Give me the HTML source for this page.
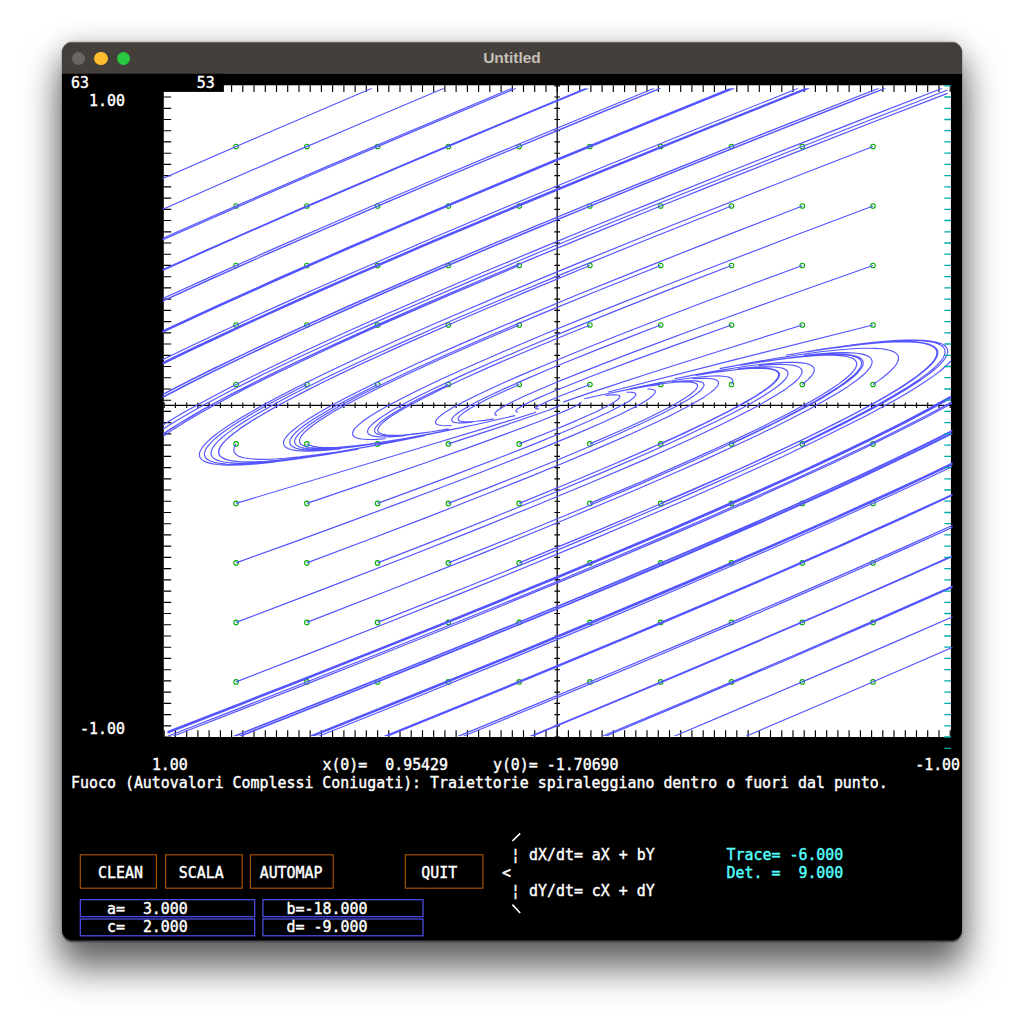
<!DOCTYPE html>
<html><head><meta charset="utf-8"><title>Untitled</title>
<style>
html,body{margin:0;padding:0}
body{width:1024px;height:1025px;position:relative;overflow:hidden;background:#fff}
#sh{position:absolute;left:62.2px;top:42.1px;width:899.5px;height:900.4px;border-radius:11px;box-shadow:0 24px 36px 3px rgba(0,0,0,.58),0 2px 26px rgba(0,0,0,.17),0 0 1.5px rgba(0,0,0,.6)}
#win{position:absolute;left:62.2px;top:42.1px;width:899.5px;height:900.4px;border-radius:11px;overflow:hidden;background:#000;box-shadow:inset 0 -1.6px 0 #4a4a4a}
#win>.in{position:absolute;left:-62.2px;top:-42.1px;width:1024px;height:1025px}
#tb{position:absolute;left:62px;top:42px;width:900px;height:32px;background:#453f3b;box-shadow:inset 0 1px 0 rgba(255,255,255,.22)}
#tb .l{position:absolute;top:9.7px;width:13.6px;height:13.6px;border-radius:50%}
#ttl{position:absolute;left:62px;top:42px;width:900px;height:32px;line-height:32px;text-align:center;color:#c4bfba;font:bold 15.5px/32px "Liberation Sans",sans-serif}
.t{position:absolute;white-space:pre;font-family:"DejaVu Sans Mono","Liberation Mono",monospace;font-weight:normal;font-size:14.92px;line-height:17.96px;height:17.96px;-webkit-text-stroke:0.4px currentColor;margin-top:1px;transform:scaleY(1.06);transform-origin:0 14.2px}
</style></head><body>
<div id="sh"></div>
<div id="win"><div class="in">
<div id="tb"><div class="l" style="left:9.9px;background:#6a6763"></div><div class="l" style="left:32.2px;background:#febc2e"></div><div class="l" style="left:54.6px;background:#28c840"></div></div>
<div id="ttl">Untitled</div>
<svg width="1024" height="1025" viewBox="0 0 1024 1025" style="position:absolute;left:0;top:0"><defs><clipPath id="cp"><rect x="162.6" y="88.3" width="789.9" height="647.9"/></clipPath></defs><rect x="163.8" y="85.3" width="787.1" height="651.7" fill="#fff"/><path d="M164.2 85.3V92M164.2 730.2V737M164.2 402.5V408.1M175.4 85.3V92M175.4 730.2V737M175.4 402.5V408.1M186.7 85.3V92M186.7 730.2V737M186.7 402.5V408.1M197.9 85.3V92M197.9 730.2V737M197.9 402.5V408.1M209.1 85.3V92M209.1 730.2V737M209.1 402.5V408.1M220.4 85.3V92M220.4 730.2V737M220.4 402.5V408.1M231.6 85.3V92M231.6 730.2V737M231.6 402.5V408.1M242.8 85.3V92M242.8 730.2V737M242.8 402.5V408.1M254.0 85.3V92M254.0 730.2V737M254.0 402.5V408.1M265.3 85.3V92M265.3 730.2V737M265.3 402.5V408.1M276.5 85.3V92M276.5 730.2V737M276.5 402.5V408.1M287.7 85.3V92M287.7 730.2V737M287.7 402.5V408.1M299.0 85.3V92M299.0 730.2V737M299.0 402.5V408.1M310.2 85.3V92M310.2 730.2V737M310.2 402.5V408.1M321.4 85.3V92M321.4 730.2V737M321.4 402.5V408.1M332.6 85.3V92M332.6 730.2V737M332.6 402.5V408.1M343.9 85.3V92M343.9 730.2V737M343.9 402.5V408.1M355.1 85.3V92M355.1 730.2V737M355.1 402.5V408.1M366.3 85.3V92M366.3 730.2V737M366.3 402.5V408.1M377.6 85.3V92M377.6 730.2V737M377.6 402.5V408.1M388.8 85.3V92M388.8 730.2V737M388.8 402.5V408.1M400.0 85.3V92M400.0 730.2V737M400.0 402.5V408.1M411.2 85.3V92M411.2 730.2V737M411.2 402.5V408.1M422.5 85.3V92M422.5 730.2V737M422.5 402.5V408.1M433.7 85.3V92M433.7 730.2V737M433.7 402.5V408.1M444.9 85.3V92M444.9 730.2V737M444.9 402.5V408.1M456.1 85.3V92M456.1 730.2V737M456.1 402.5V408.1M467.4 85.3V92M467.4 730.2V737M467.4 402.5V408.1M478.6 85.3V92M478.6 730.2V737M478.6 402.5V408.1M489.8 85.3V92M489.8 730.2V737M489.8 402.5V408.1M501.1 85.3V92M501.1 730.2V737M501.1 402.5V408.1M512.3 85.3V92M512.3 730.2V737M512.3 402.5V408.1M523.5 85.3V92M523.5 730.2V737M523.5 402.5V408.1M534.7 85.3V92M534.7 730.2V737M534.7 402.5V408.1M546.0 85.3V92M546.0 730.2V737M546.0 402.5V408.1M557.2 85.3V92M557.2 730.2V737M557.2 402.5V408.1M568.4 85.3V92M568.4 730.2V737M568.4 402.5V408.1M579.7 85.3V92M579.7 730.2V737M579.7 402.5V408.1M590.9 85.3V92M590.9 730.2V737M590.9 402.5V408.1M602.1 85.3V92M602.1 730.2V737M602.1 402.5V408.1M613.3 85.3V92M613.3 730.2V737M613.3 402.5V408.1M624.6 85.3V92M624.6 730.2V737M624.6 402.5V408.1M635.8 85.3V92M635.8 730.2V737M635.8 402.5V408.1M647.0 85.3V92M647.0 730.2V737M647.0 402.5V408.1M658.3 85.3V92M658.3 730.2V737M658.3 402.5V408.1M669.5 85.3V92M669.5 730.2V737M669.5 402.5V408.1M680.7 85.3V92M680.7 730.2V737M680.7 402.5V408.1M691.9 85.3V92M691.9 730.2V737M691.9 402.5V408.1M703.2 85.3V92M703.2 730.2V737M703.2 402.5V408.1M714.4 85.3V92M714.4 730.2V737M714.4 402.5V408.1M725.6 85.3V92M725.6 730.2V737M725.6 402.5V408.1M736.8 85.3V92M736.8 730.2V737M736.8 402.5V408.1M748.1 85.3V92M748.1 730.2V737M748.1 402.5V408.1M759.3 85.3V92M759.3 730.2V737M759.3 402.5V408.1M770.5 85.3V92M770.5 730.2V737M770.5 402.5V408.1M781.8 85.3V92M781.8 730.2V737M781.8 402.5V408.1M793.0 85.3V92M793.0 730.2V737M793.0 402.5V408.1M804.2 85.3V92M804.2 730.2V737M804.2 402.5V408.1M815.4 85.3V92M815.4 730.2V737M815.4 402.5V408.1M826.7 85.3V92M826.7 730.2V737M826.7 402.5V408.1M837.9 85.3V92M837.9 730.2V737M837.9 402.5V408.1M849.1 85.3V92M849.1 730.2V737M849.1 402.5V408.1M860.4 85.3V92M860.4 730.2V737M860.4 402.5V408.1M871.6 85.3V92M871.6 730.2V737M871.6 402.5V408.1M882.8 85.3V92M882.8 730.2V737M882.8 402.5V408.1M894.0 85.3V92M894.0 730.2V737M894.0 402.5V408.1M905.3 85.3V92M905.3 730.2V737M905.3 402.5V408.1M916.5 85.3V92M916.5 730.2V737M916.5 402.5V408.1M927.7 85.3V92M927.7 730.2V737M927.7 402.5V408.1M939.0 85.3V92M939.0 730.2V737M939.0 402.5V408.1M950.2 85.3V92M950.2 730.2V737M950.2 402.5V408.1M163.8 85.8H171.2M554.4 85.8H560.0M163.8 97.0H171.2M554.4 97.0H560.0M163.8 108.3H171.2M554.4 108.3H560.0M163.8 119.5H171.2M554.4 119.5H560.0M163.8 130.7H171.2M554.4 130.7H560.0M163.8 141.9H171.2M554.4 141.9H560.0M163.8 153.2H171.2M554.4 153.2H560.0M163.8 164.4H171.2M554.4 164.4H560.0M163.8 175.6H171.2M554.4 175.6H560.0M163.8 186.9H171.2M554.4 186.9H560.0M163.8 198.1H171.2M554.4 198.1H560.0M163.8 209.3H171.2M554.4 209.3H560.0M163.8 220.5H171.2M554.4 220.5H560.0M163.8 231.8H171.2M554.4 231.8H560.0M163.8 243.0H171.2M554.4 243.0H560.0M163.8 254.2H171.2M554.4 254.2H560.0M163.8 265.4H171.2M554.4 265.4H560.0M163.8 276.7H171.2M554.4 276.7H560.0M163.8 287.9H171.2M554.4 287.9H560.0M163.8 299.1H171.2M554.4 299.1H560.0M163.8 310.4H171.2M554.4 310.4H560.0M163.8 321.6H171.2M554.4 321.6H560.0M163.8 332.8H171.2M554.4 332.8H560.0M163.8 344.0H171.2M554.4 344.0H560.0M163.8 355.3H171.2M554.4 355.3H560.0M163.8 366.5H171.2M554.4 366.5H560.0M163.8 377.7H171.2M554.4 377.7H560.0M163.8 389.0H171.2M554.4 389.0H560.0M163.8 400.2H171.2M554.4 400.2H560.0M163.8 411.4H171.2M554.4 411.4H560.0M163.8 422.6H171.2M554.4 422.6H560.0M163.8 433.9H171.2M554.4 433.9H560.0M163.8 445.1H171.2M554.4 445.1H560.0M163.8 456.3H171.2M554.4 456.3H560.0M163.8 467.6H171.2M554.4 467.6H560.0M163.8 478.8H171.2M554.4 478.8H560.0M163.8 490.0H171.2M554.4 490.0H560.0M163.8 501.2H171.2M554.4 501.2H560.0M163.8 512.5H171.2M554.4 512.5H560.0M163.8 523.7H171.2M554.4 523.7H560.0M163.8 534.9H171.2M554.4 534.9H560.0M163.8 546.1H171.2M554.4 546.1H560.0M163.8 557.4H171.2M554.4 557.4H560.0M163.8 568.6H171.2M554.4 568.6H560.0M163.8 579.8H171.2M554.4 579.8H560.0M163.8 591.1H171.2M554.4 591.1H560.0M163.8 602.3H171.2M554.4 602.3H560.0M163.8 613.5H171.2M554.4 613.5H560.0M163.8 624.7H171.2M554.4 624.7H560.0M163.8 636.0H171.2M554.4 636.0H560.0M163.8 647.2H171.2M554.4 647.2H560.0M163.8 658.4H171.2M554.4 658.4H560.0M163.8 669.7H171.2M554.4 669.7H560.0M163.8 680.9H171.2M554.4 680.9H560.0M163.8 692.1H171.2M554.4 692.1H560.0M163.8 703.3H171.2M554.4 703.3H560.0M163.8 714.6H171.2M554.4 714.6H560.0M163.8 725.8H171.2M554.4 725.8H560.0M163.8 737.0H171.2M554.4 737.0H560.0" stroke="#000" stroke-width="1.15" fill="none"/><path d="M557.2 85.3V737M163.8 405.3H950.9" stroke="#000" stroke-width="1.3" fill="none"/><g fill="none" stroke="#00aa00" stroke-width="1.05"><circle cx="236.1" cy="146.5" r="2.3"/><circle cx="306.9" cy="146.5" r="2.3"/><circle cx="377.6" cy="146.5" r="2.3"/><circle cx="448.4" cy="146.5" r="2.3"/><circle cx="519.2" cy="146.5" r="2.3"/><circle cx="589.9" cy="146.5" r="2.3"/><circle cx="660.7" cy="146.5" r="2.3"/><circle cx="731.5" cy="146.5" r="2.3"/><circle cx="802.3" cy="146.5" r="2.3"/><circle cx="873.0" cy="146.5" r="2.3"/><circle cx="236.1" cy="206.0" r="2.3"/><circle cx="306.9" cy="206.0" r="2.3"/><circle cx="377.6" cy="206.0" r="2.3"/><circle cx="448.4" cy="206.0" r="2.3"/><circle cx="519.2" cy="206.0" r="2.3"/><circle cx="589.9" cy="206.0" r="2.3"/><circle cx="660.7" cy="206.0" r="2.3"/><circle cx="731.5" cy="206.0" r="2.3"/><circle cx="802.3" cy="206.0" r="2.3"/><circle cx="873.0" cy="206.0" r="2.3"/><circle cx="236.1" cy="265.5" r="2.3"/><circle cx="306.9" cy="265.5" r="2.3"/><circle cx="377.6" cy="265.5" r="2.3"/><circle cx="448.4" cy="265.5" r="2.3"/><circle cx="519.2" cy="265.5" r="2.3"/><circle cx="589.9" cy="265.5" r="2.3"/><circle cx="660.7" cy="265.5" r="2.3"/><circle cx="731.5" cy="265.5" r="2.3"/><circle cx="802.3" cy="265.5" r="2.3"/><circle cx="873.0" cy="265.5" r="2.3"/><circle cx="236.1" cy="325.0" r="2.3"/><circle cx="306.9" cy="325.0" r="2.3"/><circle cx="377.6" cy="325.0" r="2.3"/><circle cx="448.4" cy="325.0" r="2.3"/><circle cx="519.2" cy="325.0" r="2.3"/><circle cx="589.9" cy="325.0" r="2.3"/><circle cx="660.7" cy="325.0" r="2.3"/><circle cx="731.5" cy="325.0" r="2.3"/><circle cx="802.3" cy="325.0" r="2.3"/><circle cx="873.0" cy="325.0" r="2.3"/><circle cx="236.1" cy="384.5" r="2.3"/><circle cx="306.9" cy="384.5" r="2.3"/><circle cx="377.6" cy="384.5" r="2.3"/><circle cx="448.4" cy="384.5" r="2.3"/><circle cx="519.2" cy="384.5" r="2.3"/><circle cx="589.9" cy="384.5" r="2.3"/><circle cx="660.7" cy="384.5" r="2.3"/><circle cx="731.5" cy="384.5" r="2.3"/><circle cx="802.3" cy="384.5" r="2.3"/><circle cx="873.0" cy="384.5" r="2.3"/><circle cx="236.1" cy="443.9" r="2.3"/><circle cx="306.9" cy="443.9" r="2.3"/><circle cx="377.6" cy="443.9" r="2.3"/><circle cx="448.4" cy="443.9" r="2.3"/><circle cx="519.2" cy="443.9" r="2.3"/><circle cx="589.9" cy="443.9" r="2.3"/><circle cx="660.7" cy="443.9" r="2.3"/><circle cx="731.5" cy="443.9" r="2.3"/><circle cx="802.3" cy="443.9" r="2.3"/><circle cx="873.0" cy="443.9" r="2.3"/><circle cx="236.1" cy="503.4" r="2.3"/><circle cx="306.9" cy="503.4" r="2.3"/><circle cx="377.6" cy="503.4" r="2.3"/><circle cx="448.4" cy="503.4" r="2.3"/><circle cx="519.2" cy="503.4" r="2.3"/><circle cx="589.9" cy="503.4" r="2.3"/><circle cx="660.7" cy="503.4" r="2.3"/><circle cx="731.5" cy="503.4" r="2.3"/><circle cx="802.3" cy="503.4" r="2.3"/><circle cx="873.0" cy="503.4" r="2.3"/><circle cx="236.1" cy="562.9" r="2.3"/><circle cx="306.9" cy="562.9" r="2.3"/><circle cx="377.6" cy="562.9" r="2.3"/><circle cx="448.4" cy="562.9" r="2.3"/><circle cx="519.2" cy="562.9" r="2.3"/><circle cx="589.9" cy="562.9" r="2.3"/><circle cx="660.7" cy="562.9" r="2.3"/><circle cx="731.5" cy="562.9" r="2.3"/><circle cx="802.3" cy="562.9" r="2.3"/><circle cx="873.0" cy="562.9" r="2.3"/><circle cx="236.1" cy="622.4" r="2.3"/><circle cx="306.9" cy="622.4" r="2.3"/><circle cx="377.6" cy="622.4" r="2.3"/><circle cx="448.4" cy="622.4" r="2.3"/><circle cx="519.2" cy="622.4" r="2.3"/><circle cx="589.9" cy="622.4" r="2.3"/><circle cx="660.7" cy="622.4" r="2.3"/><circle cx="731.5" cy="622.4" r="2.3"/><circle cx="802.3" cy="622.4" r="2.3"/><circle cx="873.0" cy="622.4" r="2.3"/><circle cx="236.1" cy="681.9" r="2.3"/><circle cx="306.9" cy="681.9" r="2.3"/><circle cx="377.6" cy="681.9" r="2.3"/><circle cx="448.4" cy="681.9" r="2.3"/><circle cx="519.2" cy="681.9" r="2.3"/><circle cx="589.9" cy="681.9" r="2.3"/><circle cx="660.7" cy="681.9" r="2.3"/><circle cx="731.5" cy="681.9" r="2.3"/><circle cx="802.3" cy="681.9" r="2.3"/><circle cx="873.0" cy="681.9" r="2.3"/></g><g clip-path="url(#cp)"><path d="M371.9 88.3L262.7 135.0L159.4 179.9M443.9 88.3L359.0 124.2L281.5 157.4L220.8 183.7L153.0 213.5M516.0 88.3L415.2 130.6L317.4 172.2L239.3 206.1L158.4 241.8M588.3 88.3L535.1 110.3L472.4 136.4L401.6 166.3L346.2 189.9L294.3 212.3L245.6 233.5L200.1 253.7L157.5 272.8M660.7 88.3L578.1 122.1L507.7 151.3L441.5 179.0L380.1 205.1L323.2 229.6L262.2 256.3L214.3 277.6L163.1 300.9M733.2 88.3L646.7 123.3L557.1 160.0L475.1 194.1L400.8 225.6L333.7 254.5L273.3 281.1L212.6 308.5L159.1 333.4M805.9 88.3L704.1 129.0L598.6 171.8L513.4 206.9L429.1 242.4L354.8 274.5L321.1 289.3L283.6 306.0L249.0 321.8L217.2 336.5L188.0 350.3L161.4 363.2M878.8 88.3L816.7 112.7L752.1 138.3L691.3 162.6L634.3 185.6L581.2 207.2L531.8 227.6L485.8 246.8L436.4 267.8L391.1 287.3L349.8 305.4L312.2 322.3L278.0 337.9L247.1 352.4L215.4 367.6L187.4 381.5L162.8 394.2M947.5 90.0L873.2 118.8L792.5 150.3L726.8 176.3L657.9 203.8L595.1 229.3L538.0 252.8L480.0 277.1L428.2 299.2L382.1 319.4L336.9 339.7L297.7 357.8L263.7 374.1L232.0 390.1L205.5 404.1L193.1 411.0L182.0 417.4L172.2 423.3L163.5 428.8M873.0 146.5L766.9 187.7L666.9 227.3L580.7 262.1L539.5 279.1L501.7 294.9L467.0 309.7L431.0 325.2L402.4 337.8L372.9 351.1L346.5 363.3L320.3 375.8L297.4 387.1L277.5 397.3L258.8 407.5L243.2 416.4L230.4 424.3L219.3 431.9L215.2 435.0L211.0 438.5L207.5 441.7L204.7 444.6L202.5 447.2L200.8 450.0L199.8 452.1L199.4 454.4L199.6 456.4L200.4 458.1L201.8 459.6L203.9 461.1L206.3 462.1L209.5 463.1L213.1 463.9L217.8 464.5L222.9 464.9L228.4 465.1L241.1 464.9L256.3 464.0L274.0 462.2M512.2 88.3L410.5 131.0L325.0 167.4L246.7 201.3L194.5 224.3L155.0 241.8M585.9 88.3L474.0 134.8L414.8 159.7L359.1 183.5L296.7 210.4L247.7 231.8L201.8 252.1L159.0 271.3M660.0 88.3L585.4 118.8L514.5 148.2L448.6 175.8L387.4 201.8L330.1 226.5L268.4 253.4L212.2 278.4L161.2 301.6M734.5 88.3L646.7 123.8L557.7 160.3L476.8 194.0L402.9 225.3L335.8 254.3L275.3 280.9L214.7 308.2L161.2 333.0M809.3 88.3L708.0 128.7L603.4 171.2L510.3 209.7L426.9 244.8L353.5 276.5L320.2 291.2L283.1 307.7L248.9 323.3L217.5 337.9L188.7 351.5L162.4 364.3M884.7 88.3L823.4 112.3L758.9 137.8L698.7 161.9L642.4 184.6L581.5 209.5L532.6 229.6L487.2 248.6L438.3 269.3L393.6 288.6L352.7 306.5L315.5 323.2L277.2 340.7L247.1 354.9L216.2 369.7L189.0 383.3L162.3 397.2M947.5 93.4L871.3 122.8L791.8 153.8L719.2 182.6L652.7 209.2L591.4 234.1L529.1 259.8L473.3 283.2L423.5 304.6L374.5 326.1L331.7 345.4L294.6 362.8L259.6 379.8L230.1 394.8L216.2 402.2L203.7 409.1L192.5 415.5L181.0 422.4L172.4 427.8L163.7 433.6M731.5 206.0L645.3 240.3L564.5 273.1L495.3 302.0L462.4 316.0L432.4 329.0L405.0 341.1L376.7 353.9L354.4 364.2L331.5 375.1L311.3 385.0L291.3 395.1L274.2 404.2L259.6 412.4L246.1 420.5L235.1 427.6L226.6 433.9L223.1 436.7L219.5 439.8L217.1 442.2L214.8 444.9L213.0 447.3L211.9 449.5L211.2 451.5L211.0 453.6L211.3 455.1L212.3 456.8L213.7 458.2L215.6 459.4L217.9 460.4L221.0 461.3L224.1 462.0L228.1 462.5L232.4 462.9L237.6 463.2L249.0 463.1L262.2 462.4L277.7 461.0L295.1 458.9M802.3 206.0L720.7 237.6L643.7 268.1L577.4 294.8L516.6 320.1L462.2 343.4L417.5 363.3L397.2 372.7L376.9 382.3L359.3 391.0L344.0 398.8L329.5 406.6L317.5 413.5L307.6 419.6L299.1 425.4L292.6 430.5L289.9 432.9L287.7 435.2L286.0 437.2L284.6 439.3L283.9 441.0L283.5 442.7L283.6 444.3L284.2 445.6L285.2 446.8L286.8 447.9L288.6 448.7L291.0 449.5L293.8 450.1L297.3 450.6L305.4 451.1L315.1 450.9L326.8 450.2L340.3 448.9M873.0 206.0L796.0 235.0L723.0 263.0L659.6 287.7L600.9 311.1L547.8 332.8L503.5 351.5L462.6 369.5L444.4 377.7L428.4 385.2L413.0 392.7L399.8 399.4L388.7 405.3L378.6 411.1L370.4 416.1L363.5 420.8L358.2 425.1L354.8 428.7L353.6 430.4L352.9 431.9L352.6 433.2L352.7 434.5L353.1 435.5L354.0 436.5L355.3 437.3L357.1 438.0L359.3 438.6L361.8 439.0L368.0 439.5L375.9 439.4L385.5 438.8M654.2 88.3L575.6 120.5L504.9 149.9L439.0 177.5L377.9 203.5L321.3 228.0L268.8 250.9L212.4 276.1L160.6 299.6M730.6 88.3L638.8 125.5L560.6 157.5L488.7 187.5L413.7 219.2L345.9 248.4L277.1 278.6L215.7 306.3L161.5 331.4M807.6 88.3L700.6 131.1L606.3 169.3L512.7 208.0L429.8 243.0L349.5 277.7L316.4 292.3L279.4 308.9L250.9 321.9L219.2 336.5L190.1 350.3L163.5 363.1M885.5 88.3L814.4 116.2L750.6 141.5L691.0 165.3L635.4 187.8L583.5 209.0L527.4 232.2L483.0 250.8L435.0 271.2L390.7 290.3L350.2 308.1L313.4 324.6L275.5 342.0L245.6 356.0L215.1 370.8L188.2 384.2L161.8 398.0M519.2 265.5L453.8 293.1L392.1 319.9L364.8 332.1L335.6 345.3L312.8 355.9L288.5 367.4L266.7 378.0L247.1 387.8L229.6 396.9L212.0 406.4L198.6 413.9L185.4 421.8L174.1 428.9L163.7 436.1M589.9 265.5L523.7 292.9L462.0 319.0L409.9 341.8L385.4 352.9L363.1 363.1L343.0 372.6L322.4 382.6L306.3 390.6L290.1 399.0L276.0 406.6L262.4 414.4L251.0 421.3L241.6 427.5L233.3 433.6L227.1 438.8L222.7 443.4L221.1 445.4L219.8 447.7L219.0 449.4L218.6 451.2L218.6 452.9L219.0 454.4L219.8 455.8L221.3 457.1L222.8 458.1L225.1 459.1L227.7 459.9L230.7 460.6L238.1 461.6L246.6 461.9L257.4 461.8L269.7 461.1L283.4 459.8L299.0 458.0L316.2 455.6M660.7 265.5L599.0 290.2L541.3 313.9L492.0 334.7L447.3 354.2L407.9 372.0L376.1 387.2L361.9 394.3L348.0 401.6L336.1 408.1L326.0 413.9L316.8 419.7L309.5 424.7L303.8 429.1L299.3 433.3L296.4 436.9L295.4 438.6L294.8 440.1L294.6 441.5L294.8 442.9L295.4 444.0L296.3 445.1L297.7 446.1L299.3 446.9L301.3 447.5L303.9 448.1L309.6 448.9L317.2 449.2L326.1 449.0L336.3 448.4L348.1 447.2L361.4 445.6M731.5 265.5L674.4 287.6L620.6 308.9L574.2 327.6L531.6 345.2L493.4 361.5L462.1 375.4L433.6 388.7L421.2 394.8L410.5 400.3L400.3 405.7L391.8 410.6L384.8 414.9L378.8 419.0L374.2 422.5L370.7 425.8L369.5 427.2L368.4 428.7L367.9 429.9L367.6 431.1L367.6 432.2L368.0 433.1L368.7 433.9L369.7 434.7L372.6 435.9L376.9 436.6L382.5 437.0L389.1 436.9L397.2 436.5L406.5 435.5M802.3 265.5L749.8 285.0L699.8 303.8L656.3 320.5L615.8 336.3L579.0 351.0L548.1 363.7L519.2 375.9L494.9 386.7L474.2 396.5L458.3 404.6L452.0 408.1L446.5 411.4L442.0 414.5L438.8 417.1L436.7 419.4L435.6 421.3L435.4 422.1L435.6 422.8L435.9 423.5L436.6 424.1L438.8 425.0L442.0 425.5L446.3 425.7L451.7 425.5M873.0 265.5L779.1 298.7L700.1 327.3L634.0 351.9L604.9 363.1L579.3 373.1L556.5 382.3L537.8 390.2L522.4 397.1L510.1 403.1L501.4 407.9L498.5 409.8L496.4 411.5L495.2 412.9L494.9 414.0L495.0 414.5L495.4 414.9L496.9 415.4M798.2 88.3L691.6 131.0L596.9 169.5L511.7 204.7L427.4 240.3L353.1 272.5L319.3 287.3L281.7 304.1L247.0 319.9L214.8 334.8L190.0 346.6L162.4 359.8M878.6 88.3L754.2 137.3L693.7 161.5L637.2 184.4L584.5 205.9L535.4 226.2L489.8 245.3L440.6 266.1L395.6 285.6L354.4 303.6L316.9 320.4L277.9 338.2L247.0 352.7L215.5 367.9L187.6 381.7L163.1 394.4M947.5 93.3L872.0 122.5L792.5 153.6L719.7 182.3L653.3 209.0L592.7 233.6L531.0 259.1L475.7 282.3L421.1 305.8L373.1 327.0L330.6 346.2L290.3 365.1L256.1 381.8L227.3 396.6L213.7 403.8L201.6 410.6L190.7 416.9L179.5 423.6L171.2 429.0L162.8 434.7M448.4 325.0L402.0 345.4L359.6 364.8L324.5 381.6L308.3 389.7L293.8 397.2L280.9 404.1L268.1 411.2L258.3 417.0L248.7 422.9L240.7 428.3L233.4 433.7L227.8 438.4L223.6 442.6L221.9 444.7L220.6 446.6L219.7 448.4L219.1 450.1L218.8 451.6L218.9 452.9L219.2 454.2L220.0 455.5L220.9 456.6L222.3 457.6L224.1 458.6L226.1 459.4L228.5 460.0L231.5 460.7L237.9 461.5L245.8 461.9L255.2 461.8L265.2 461.4L277.2 460.4L290.4 459.0L304.6 457.3L320.3 455.0L337.3 452.4M519.2 325.0L477.4 342.8L438.9 359.8L406.6 374.5L378.0 388.2L353.6 400.7L344.1 405.8L334.7 411.1L326.6 416.0L319.1 420.8L312.9 425.2L308.1 429.0L304.1 432.7L301.4 435.9L299.9 438.7L299.6 439.9L299.5 441.2L299.7 442.2L300.2 443.2L300.9 444.2L302.0 445.0L303.3 445.8L305.1 446.5L309.2 447.5L314.5 448.1L321.0 448.4L328.2 448.3L337.0 447.8L346.8 447.0L357.4 445.8L369.4 444.2L382.5 442.3M589.9 325.0L552.8 340.2L518.1 354.7L488.7 367.4L462.3 379.3L439.1 390.2L420.7 399.4L404.7 408.0L398.0 411.9L392.5 415.4L387.6 418.8L383.8 421.8L381.0 424.4L379.0 426.8L378.0 428.9L377.8 429.8L377.8 430.7L378.1 431.5L378.7 432.3L380.4 433.5L383.1 434.4L386.8 435.0L391.2 435.3L396.7 435.3L403.1 435.0L410.3 434.4L427.6 432.2M660.7 325.0L628.1 337.6L597.4 349.6L570.9 360.3L546.5 370.3L524.7 379.6L506.7 387.6L490.3 395.2L476.9 401.8L466.1 407.7L458.5 412.5L455.8 414.5L453.7 416.4L452.3 418.1L451.7 419.4L451.8 420.6L452.7 421.6L454.2 422.2L456.5 422.7L459.5 422.9L463.2 422.9L472.8 422.2M731.5 325.0L676.7 344.6L630.8 361.4L592.6 375.8L561.4 388.2L548.5 393.5L538.0 398.1L529.5 402.0L522.9 405.4L518.5 408.2L517.1 409.2L516.2 410.1L515.9 410.9L516.0 411.5L516.7 411.9L518.0 412.1M802.3 325.0L715.0 352.5L645.8 374.5L594.2 391.4L576.0 397.6L563.1 402.1M873.0 325.0L730.2 360.9L608.3 392.0M942.3 88.3L865.3 118.1L793.9 146.1L727.7 172.3L658.3 200.1L595.0 225.8L537.3 249.6L485.0 271.5L432.0 294.2L384.8 314.8L342.9 333.6L305.8 350.6L269.9 367.7L238.9 383.0L222.4 391.5L207.4 399.4L183.6 412.5L172.6 418.9L162.8 424.9M306.9 384.5L280.4 398.0L269.0 404.1L257.2 410.7L248.2 415.9L239.1 421.5L231.2 426.6L224.5 431.3L218.9 435.5L213.7 439.9L210.3 443.3L207.3 446.8L205.5 449.9L204.9 451.3L204.5 452.9L204.4 454.1L204.6 455.5L205.0 456.5L205.7 457.7L206.6 458.8L207.9 459.7L211.0 461.3L215.0 462.5L220.2 463.4L226.1 464.0L233.3 464.3L241.7 464.2L250.8 463.9L261.0 463.1L272.3 462.1L283.8 460.8L297.1 459.0L325.8 454.7L358.4 449.1M377.6 384.5L355.8 395.4L336.4 405.6L321.2 414.4L314.5 418.5L308.7 422.3L303.8 425.8L299.3 429.4L296.1 432.2L293.3 435.1L291.4 437.6L290.1 440.1L289.7 442.3L290.1 444.1L290.6 445.0L291.4 445.8L293.4 447.1L296.1 448.2L299.7 449.1L303.9 449.6L309.1 450.0L315.3 450.0L322.0 449.8L329.6 449.4L338.1 448.7L356.8 446.5L378.6 443.3L403.6 439.0M448.4 384.5L431.1 392.8L415.7 400.6L403.3 407.3L393.0 413.4L384.8 418.8L379.3 423.3L377.3 425.3L375.7 427.3L374.8 429.0L374.5 430.5L374.8 431.9L375.7 433.0L377.1 433.9L379.2 434.7L381.7 435.2L385.0 435.6L388.9 435.8L393.3 435.8L403.9 435.2L416.6 433.9L431.5 431.8L448.7 428.9M519.2 384.5L495.0 395.5L485.5 400.1L477.2 404.4L470.3 408.3L465.3 411.5L461.4 414.4L459.0 416.9L458.3 417.9L458.1 418.9L458.2 419.6L458.7 420.3L459.6 420.9L460.8 421.3L464.5 421.8L469.7 421.8L476.3 421.3L484.3 420.4L493.9 418.9M589.9 384.5L561.4 395.5L551.2 399.7L543.4 403.3L538.2 406.0L536.7 407.0L535.8 407.8L535.6 408.4L536.0 408.8L537.2 408.9L539.1 408.8M660.7 384.5L645.7 386.5L627.8 389.6L607.0 393.8L584.2 398.8M731.5 384.5L732.6 382.3L732.8 381.3L732.7 380.3L732.5 379.6L731.9 378.8L731.0 378.2L729.9 377.6L727.0 376.7L723.2 376.2L718.2 375.9L712.3 376.0L705.1 376.5L697.2 377.2L688.3 378.3L678.3 379.8L655.5 383.6L629.4 388.7M802.3 384.5L808.0 379.6L810.1 377.5L812.0 375.3L813.2 373.5L814.0 371.7L814.3 370.1L814.2 368.6L813.6 367.4L812.5 366.2L811.1 365.3L809.2 364.4L806.8 363.7L803.8 363.1L796.7 362.4L787.5 362.3L776.7 362.9L764.2 364.0L749.5 365.8L733.0 368.2L715.3 371.1L695.8 374.6L674.6 378.7M873.0 384.5L878.6 380.6L883.4 377.0L887.4 373.7L891.3 370.2L893.9 367.5L896.1 364.6L897.6 362.0L898.4 359.7L898.6 357.7L898.0 355.6L897.0 354.1L895.2 352.6L892.8 351.4L889.4 350.3L885.6 349.4L881.1 348.8L875.7 348.4L869.8 348.2L863.5 348.2L856.2 348.5L840.0 349.7L820.7 351.8L798.9 354.7L775.0 358.5L748.7 363.1L719.7 368.6M236.1 443.9L234.9 446.1L234.1 448.0L233.8 449.7L234.0 451.5L234.6 452.8L235.8 454.2L237.4 455.4L239.4 456.4L241.8 457.3L245.0 458.0L251.9 459.0L261.2 459.4L272.1 459.2L285.3 458.3L299.9 456.9L316.3 454.9L334.8 452.2L355.2 448.9L376.6 445.1L399.8 440.7L424.7 435.7M306.9 443.9L309.5 445.3L313.3 446.4L317.9 447.1L323.6 447.5L330.5 447.5L337.9 447.2L346.8 446.5L356.6 445.6L367.7 444.2L379.4 442.6L406.1 438.2L436.4 432.5L469.8 425.7M377.6 443.9L407.9 438.5L441.0 432.0L477.3 424.2L515.0 415.6M448.4 443.9L492.1 429.6L525.4 418.3L548.6 410.2L555.9 407.4L560.2 405.5M519.2 443.9L551.1 431.2L576.4 420.6L595.8 411.9L603.7 408.0L609.9 404.7L614.7 401.8L617.9 399.5L619.6 397.6L619.9 396.8L619.8 396.2L619.4 395.6L618.5 395.2L615.6 394.8L611.2 394.9L605.3 395.5M589.9 443.9L611.0 434.8L630.3 426.2L646.4 418.7L660.6 411.7L672.6 405.4L681.8 400.1L689.3 395.2L692.1 393.0L694.3 391.1L696.0 389.3L697.1 387.7L697.5 386.3L697.4 385.1L696.8 384.1L695.5 383.3L693.5 382.6L691.1 382.1L688.0 381.9L684.3 381.8L675.4 382.3L664.1 383.5L650.5 385.4M660.7 443.9L686.4 432.2L709.6 421.1L728.6 411.5L744.9 402.7L758.2 394.8L763.1 391.6L767.8 388.3L771.6 385.3L774.9 382.4L777.2 379.8L778.7 377.5L779.5 375.4L779.6 374.4L779.4 373.5L778.6 372.1L776.9 370.7L774.6 369.7L771.3 368.9L767.1 368.4L762.3 368.1L756.7 368.1L750.1 368.4L735.1 369.7L717.0 372.0L695.7 375.4M731.5 443.9L761.8 429.6L788.8 416.1L810.7 404.4L820.5 398.9L829.1 393.8L836.5 389.1L843.7 384.3L848.9 380.5L853.8 376.5L857.5 373.0L860.5 369.5L862.4 366.5L862.9 365.3L863.2 363.9L863.2 362.6L863.0 361.4L862.5 360.4L861.8 359.4L860.8 358.5L859.7 357.8L856.5 356.4L852.4 355.3L847.2 354.6L840.7 354.2L833.6 354.1L825.3 354.4L815.9 355.0L806.2 355.9L794.8 357.1L769.8 360.6L740.8 365.3M802.3 443.9L837.1 427.0L852.3 419.3L868.1 411.0L880.2 404.4L892.8 397.3L903.8 390.8L913.3 384.8L921.5 379.4L929.2 373.8L934.8 369.3L939.7 364.8L943.4 360.7L944.8 358.8L946.1 356.7L946.9 355.1L947.5 353.2L947.7 351.9L947.6 350.3L947.2 348.8L946.5 347.5L945.5 346.3L944.1 345.3L942.6 344.3L940.8 343.5L936.0 342.0L930.2 341.0L923.0 340.3L914.3 340.0L904.8 340.1L894.0 340.6L881.8 341.6L869.2 342.8L854.6 344.6L839.0 346.7L822.7 349.1L804.9 352.0L786.0 355.3M172.8 736.2L248.1 706.9L313.3 681.4L374.2 657.2L440.3 630.7L501.3 606.0L557.5 582.9L609.2 561.4L663.1 538.6L706.0 520.1L750.5 500.6L790.5 482.6L830.6 464.2L865.8 447.4L900.2 430.6L926.8 416.9L952.1 403.3M236.1 503.4L423.0 447.0L490.2 426.6L536.1 412.3M306.9 503.4L369.4 482.1L422.8 463.7L468.5 447.6L507.5 433.4L538.6 421.7L561.4 412.5L569.7 408.9L575.7 406.0L579.6 403.8L580.7 402.9L581.3 402.3M377.6 503.4L448.6 477.1L507.1 454.7L532.8 444.6L554.4 435.8L574.7 427.3L591.9 419.8L606.7 413.0L618.1 407.3L626.8 402.5L630.2 400.4L632.7 398.5L634.5 396.9L635.5 395.5L635.9 394.4L635.4 393.5L634.3 392.8L632.4 392.4L629.8 392.2L626.4 392.2M448.4 503.4L489.4 487.4L527.9 472.0L561.0 458.5L591.3 445.8L618.3 434.0L640.4 424.0L660.3 414.5L676.4 406.2L683.3 402.3L689.1 398.9L693.7 395.9L697.7 393.0L700.5 390.5L702.6 388.2L703.8 386.2L704.0 385.3L703.9 384.5L703.6 383.8L703.1 383.1L701.4 382.1L698.8 381.4L695.2 380.9L690.6 380.7L685.3 380.9L678.9 381.4L671.6 382.1M519.2 503.4L564.7 484.8L607.2 467.0L643.1 451.4L675.6 436.8L703.9 423.5L726.4 412.2L736.3 407.0L745.9 401.6L754.1 396.9L760.8 392.6L766.8 388.4L771.4 384.8L774.8 381.6L777.2 378.6L777.8 377.4L778.4 376.1L778.6 374.9L778.5 373.9L778.1 372.9L777.4 371.9L776.5 371.2L775.2 370.5L771.8 369.4L767.2 368.7L761.8 368.3L754.9 368.3L747.0 368.7L738.1 369.5L728.0 370.6L716.8 372.1M589.9 503.4L640.1 482.2L686.4 461.9L725.3 444.3L759.8 427.9L774.5 420.6L789.4 413.0L800.9 406.8L812.4 400.5L822.2 394.7L831.6 388.8L839.2 383.6L845.2 379.0L850.3 374.5L853.8 370.6L855.0 368.9L855.8 367.3L856.4 365.8L856.7 364.2L856.6 363.0L856.2 361.7L855.4 360.6L854.3 359.5L852.9 358.6L851.0 357.7L846.4 356.5L840.4 355.6L833.0 355.2L824.8 355.3L814.7 355.8L803.4 356.7L791.0 358.0L777.1 359.8L761.9 362.0M660.7 503.4L715.5 479.5L739.8 468.7L765.7 456.8L785.9 447.4L807.4 437.2L826.7 427.7L844.0 418.9L859.5 410.9L874.9 402.4L886.7 395.7L898.3 388.7L908.2 382.3L917.2 376.0L924.3 370.3L929.7 365.4L931.9 362.9L933.8 360.6L935.1 358.5L936.1 356.5L936.7 354.7L936.9 353.0L936.8 351.5L936.2 349.9L935.4 348.7L934.0 347.3L932.2 346.2L930.2 345.2L927.7 344.4L924.5 343.5L917.7 342.5L909.1 341.9L898.9 341.8L887.7 342.2L874.4 343.2L859.7 344.6L843.9 346.6L826.2 349.0L807.1 352.0M167.5 732.7L241.1 704.1L305.3 679.0L375.0 651.4L439.5 625.6L498.9 601.5L561.2 576.0L610.9 555.2L662.8 533.2L709.8 513.0L757.4 492.0L799.9 472.8L837.3 455.4L870.1 439.7L901.5 424.0L928.3 410.0L950.7 397.6M239.3 736.2L360.6 688.2L465.3 646.1L513.3 626.5L567.3 604.3L617.6 583.3L664.2 563.6L707.5 545.1L747.7 527.6L790.7 508.6L830.2 490.8L861.3 476.6L894.4 461.1L924.2 446.7L951.0 433.5M318.8 736.2L419.2 696.0L509.1 659.4L600.6 621.6L682.6 587.0L755.9 555.5L828.0 523.8L860.6 509.1L897.2 492.4L925.6 479.2L951.9 466.8M236.1 562.9L292.3 542.6L346.2 522.9L393.5 505.4L437.8 488.8L478.5 473.2L513.1 459.7L545.8 446.6L574.0 434.9L598.7 424.2L618.4 415.2L633.9 407.5L640.4 403.9L645.5 400.9L649.6 398.2L652.6 395.7L654.4 393.8L655.0 392.9L655.3 392.1L655.3 391.4L655.0 390.8L654.4 390.2L653.6 389.8L651.1 389.2L647.5 388.9M306.9 562.9L367.7 540.0L425.5 517.9L475.6 498.3L522.0 479.9L564.0 462.7L599.0 447.9L631.4 433.8L658.4 421.3L670.6 415.4L681.0 410.1L689.8 405.4L697.9 400.8L704.3 396.9L709.8 393.1L714.0 389.7L716.8 386.9L717.7 385.6L718.3 384.4L718.5 383.4L718.5 382.3L718.1 381.5L717.4 380.8L716.4 380.1L715.0 379.5L711.3 378.7L706.5 378.3L700.2 378.4L692.7 378.8M377.6 562.9L443.1 537.4L504.7 512.8L557.7 491.2L606.2 470.9L649.5 452.2L685.0 436.2L701.1 428.6L717.0 420.9L730.9 414.0L742.8 407.7L754.1 401.5L763.4 396.0L770.9 391.1L777.4 386.5L782.1 382.5L785.6 378.8L786.7 377.2L787.6 375.5L788.0 374.2L788.0 372.9L787.6 371.7L786.9 370.7L785.9 369.8L784.3 368.9L782.6 368.3L780.4 367.7L774.8 367.0L767.7 366.7L759.3 366.9L749.3 367.6L737.8 368.8M448.4 562.9L518.5 534.7L584.0 507.8L639.9 484.1L690.5 462.0L712.5 452.1L735.1 441.6L752.8 433.2L771.0 424.4L787.0 416.3L802.6 408.1L816.0 400.7L827.3 394.1L837.5 387.6L845.7 381.8L852.0 376.8L854.4 374.6L856.9 372.1L858.5 370.2L860.0 368.1L860.9 366.2L861.5 364.5L861.6 362.9L861.2 361.3L860.5 360.1L859.3 358.9L857.6 357.8L855.6 356.9L853.2 356.2L850.1 355.5L843.4 354.7L834.5 354.4L824.1 354.7L812.2 355.5L798.4 356.8L783.0 358.7M519.2 562.9L593.9 532.1L663.2 502.7L691.6 490.4L722.0 477.0L749.6 464.6L774.7 453.0L797.4 442.3L820.6 431.1L838.7 422.1L857.0 412.6L872.9 404.0L888.2 395.2L901.1 387.4L911.7 380.5L921.0 373.6L928.1 367.7L930.8 365.0L933.0 362.6L934.8 360.3L936.4 357.7L937.2 355.8L937.8 353.7L937.8 351.8L937.3 350.1L936.4 348.6L934.8 347.1L933.0 346.0L930.5 344.8L927.6 343.9L924.2 343.1L920.5 342.6L915.9 342.1L906.3 341.6L894.2 341.8L880.4 342.6L865.0 344.0L847.5 346.0L828.2 348.7M167.5 731.6L243.1 702.2L306.9 677.2L376.2 649.8L440.2 624.2L499.3 600.3L561.2 574.9L617.7 551.3L669.2 529.5L715.8 509.4L757.7 490.9L799.8 471.9L836.8 454.6L869.3 439.0L900.5 423.5L927.0 409.6L951.2 396.1M233.6 736.2L359.2 686.6L412.7 665.2L472.9 640.8L529.2 617.9L581.5 596.2L630.2 575.8L675.6 556.6L718.1 538.4L757.4 521.3L793.7 505.2L832.5 487.7L867.7 471.5L899.5 456.5L928.2 442.6L953.9 429.7M310.9 736.2L411.4 695.9L511.6 655.2L601.7 618.0L682.5 583.9L762.5 549.5L833.4 518.2L895.3 490.2L923.1 477.2L954.0 462.6M387.4 736.2L476.1 700.2L558.7 666.3L634.6 634.7L704.4 605.2L776.9 574.0L842.9 545.1L902.5 518.4L955.8 493.9M463.3 736.2L529.1 709.3L604.3 678.1L663.0 653.5L728.8 625.6L789.9 599.4L846.4 574.7L907.4 547.6L955.6 525.9M236.1 622.4L321.5 589.9L402.3 558.7L472.3 531.1L536.9 505.0L595.2 480.8L643.6 460.1L665.8 450.3L688.1 440.2L707.7 431.0L724.9 422.8L741.3 414.5L755.3 407.2L767.0 400.6L777.6 394.3L785.9 388.9L792.8 383.7L795.4 381.5L797.9 379.1L799.5 377.2L800.8 375.2L801.7 373.5L802.1 371.9L802.0 370.5L801.4 369.2L800.4 368.1L799.0 367.1L797.1 366.3L794.6 365.6L791.7 365.0L788.4 364.7L780.5 364.3L770.6 364.6L758.9 365.5M306.9 622.4L396.8 587.3L481.6 553.6L554.4 524.0L621.2 496.0L650.4 483.5L680.8 470.3L704.8 459.6L729.6 448.3L751.7 437.9L773.7 427.4L792.8 417.8L809.3 409.2L824.8 400.6L837.7 393.0L848.1 386.4L857.1 380.0L863.7 374.5L866.5 371.8L868.6 369.4L870.2 367.2L871.4 364.9L872.0 363.1L872.1 361.2L871.6 359.6L870.7 358.2L869.3 356.9L867.2 355.7L864.9 354.9L861.9 354.1L858.6 353.5L854.3 353.0L844.7 352.6L833.4 352.9L819.8 353.8L804.1 355.4M377.6 622.4L472.2 584.7L514.8 567.4L560.8 548.6L597.3 533.4L636.6 516.8L672.5 501.4L705.4 487.1L735.4 473.8L766.3 459.8L790.6 448.4L815.6 436.5L837.6 425.6L859.3 414.5L877.9 404.5L893.7 395.6L908.3 386.7L920.0 378.9L929.2 372.1L932.9 369.0L936.6 365.6L939.1 363.0L941.5 360.1L943.3 357.5L944.4 355.1L945.0 352.9L945.0 350.7L944.5 349.0L943.3 347.2L941.6 345.7L939.4 344.4L936.6 343.3L933.0 342.3L929.4 341.6L924.9 341.1L920.0 340.7L914.1 340.4L901.1 340.6L886.2 341.4L868.9 343.0L849.3 345.4M167.5 733.1L240.8 704.6L305.2 679.4L375.0 651.8L439.6 626.0L499.8 601.6L562.8 575.8L613.2 554.8L665.7 532.6L713.1 512.2L755.9 493.4L798.7 474.0L836.5 456.5L869.7 440.6L901.5 424.7L928.6 410.6L951.3 398.1M234.8 736.2L357.8 687.6L462.1 645.7L509.9 626.2L573.0 600.3L623.0 579.4L669.4 559.8L712.5 541.4L752.4 524.1L789.2 507.8L828.6 490.1L864.3 473.7L896.7 458.5L925.8 444.4L952.0 431.4M309.7 736.2L409.1 696.4L509.3 655.7L609.1 614.4L689.9 580.4L762.0 549.4L832.8 518.2L894.7 490.1L922.5 477.2L953.3 462.6M384.2 736.2L471.6 700.8L554.1 666.9L630.1 635.3L709.9 601.6L773.7 574.2L839.9 545.2L899.4 518.6L952.7 494.2M458.3 736.2L534.0 705.2L608.4 674.3L677.6 645.3L742.0 617.9L802.3 592.0L858.1 567.6L909.6 544.7L957.1 523.3M532.1 736.2L648.9 687.7L698.7 666.7L757.7 641.6L813.2 617.7L865.8 594.8L905.4 577.4L952.1 556.6M605.6 736.2L700.1 696.6L790.4 658.2L884.4 617.5L959.8 584.2M236.1 681.9L314.1 651.6L385.5 623.5L458.4 594.4L524.1 567.8L583.2 543.4L641.6 518.8L693.2 496.7L742.6 474.8L785.1 455.4L821.5 438.1L854.7 421.6L869.1 414.2L884.1 406.1L895.6 399.8L907.4 392.9L917.7 386.6L926.5 380.8L934.0 375.6L941.0 370.2L946.6 365.3L950.7 361.0M167.7 736.2L241.8 707.4L317.4 677.8L378.3 653.7L444.3 627.3L505.1 602.7L561.1 579.7L612.5 558.3L666.2 535.6L714.6 514.7L758.3 495.5L797.5 477.9L836.7 459.8L871.1 443.4L901.1 428.6L927.0 415.2L951.6 401.9M240.5 736.2L355.6 690.7L420.8 664.6L481.9 639.9L529.6 620.4L583.3 598.3L625.1 580.9L672.0 561.1L715.4 542.5L755.7 525.0L792.8 508.5L832.6 490.7L863.7 476.4L896.8 460.8L926.7 446.5L953.5 433.2M313.2 736.2L413.8 695.9L514.8 654.9L606.0 617.2L687.7 582.9L760.6 551.5L832.2 520.0L894.7 491.7L922.8 478.6L954.0 463.8M385.7 736.2L471.0 701.6L565.6 662.8L641.7 631.1L711.5 601.6L775.4 574.2L841.7 545.2L901.3 518.5L954.6 494.0M458.0 736.2L540.1 702.6L614.3 671.8L672.6 647.4L738.0 619.6L798.6 593.6L854.7 569.1L906.5 546.1L954.2 524.6M530.2 736.2L595.8 709.1L648.0 687.2L710.5 660.9L757.8 640.8L802.8 621.5L855.9 598.5L905.7 576.6L952.2 555.9M602.3 736.2L691.7 698.7L795.4 654.7L878.2 618.9L953.8 585.6M674.2 736.2L747.1 705.4L829.1 670.4L893.4 642.6L953.6 616.3M746.1 736.2L845.0 694.0L954.1 646.7" fill="none" stroke="#5555ff" stroke-width="1.15" stroke-linejoin="round"/></g><rect x="62" y="73.7" width="161.9" height="18.2" fill="#000"/><path d="M944.3 85.8H951M944.3 97.0H951M944.3 108.3H951M944.3 119.5H951M944.3 130.7H951M944.3 141.9H951M944.3 153.2H951M944.3 164.4H951M944.3 175.6H951M944.3 186.9H951M944.3 198.1H951M944.3 209.3H951M944.3 220.5H951M944.3 231.8H951M944.3 243.0H951M944.3 254.2H951M944.3 265.4H951M944.3 276.7H951M944.3 287.9H951M944.3 299.1H951M944.3 310.4H951M944.3 321.6H951M944.3 332.8H951M944.3 344.0H951M944.3 355.3H951M944.3 366.5H951M944.3 377.7H951M944.3 389.0H951M944.3 400.2H951M944.3 411.4H951M944.3 422.6H951M944.3 433.9H951M944.3 445.1H951M944.3 456.3H951M944.3 467.6H951M944.3 478.8H951M944.3 490.0H951M944.3 501.2H951M944.3 512.5H951M944.3 523.7H951M944.3 534.9H951M944.3 546.1H951M944.3 557.4H951M944.3 568.6H951M944.3 579.8H951M944.3 591.1H951M944.3 602.3H951M944.3 613.5H951M944.3 624.7H951M944.3 636.0H951M944.3 647.2H951M944.3 658.4H951M944.3 669.7H951M944.3 680.9H951M944.3 692.1H951M944.3 703.3H951M944.3 714.6H951M944.3 725.8H951M944.3 737.0H951M944.3 748.3H951" stroke="#00aaaa" stroke-width="1.3" fill="none"/><rect x="80.3" y="854.8" width="76.1" height="33.4" fill="none" stroke="#aa5500" stroke-width="1.15"/><rect x="165.6" y="854.8" width="76.6" height="33.4" fill="none" stroke="#aa5500" stroke-width="1.15"/><rect x="250.4" y="854.8" width="82.8" height="33.4" fill="none" stroke="#aa5500" stroke-width="1.15"/><rect x="405.3" y="854.8" width="77.6" height="33.4" fill="none" stroke="#aa5500" stroke-width="1.15"/><rect x="80.3" y="899.7" width="174.4" height="17.0" fill="none" stroke="#5555ff" stroke-width="1.15"/><rect x="80.3" y="919.0" width="174.4" height="16.8" fill="none" stroke="#5555ff" stroke-width="1.15"/><rect x="262.9" y="899.7" width="160.1" height="17.0" fill="none" stroke="#5555ff" stroke-width="1.15"/><rect x="262.9" y="919.0" width="160.1" height="16.8" fill="none" stroke="#5555ff" stroke-width="1.15"/><path d="M512.4 841L520.2 833.4M512.4 904.6L520.2 913" stroke="#fff" stroke-width="1.6" fill="none"/></svg><div class="t" style="left:71.08px;top:73.70px;color:#fff">63</div><div class="t" style="left:196.80px;top:73.70px;color:#fff">53</div><div class="t" style="left:89.04px;top:91.66px;color:#fff">1.00</div><div class="t" style="left:80.06px;top:720.26px;color:#fff">-1.00</div><div class="t" style="left:151.90px;top:756.18px;color:#fff">1.00               x(0)=  0.95429     y(0)= -1.70690</div><div class="t" style="left:915.20px;top:756.18px;color:#fff">-1.00</div><div class="t" style="left:71.08px;top:774.14px;color:#fff">Fuoco (Autovalori Complessi Coniugati): Traiettorie spiraleggiano dentro o fuori dal punto.</div><div class="t" style="left:511.10px;top:845.98px;color:#fff">¦ dX/dt= aX + bY</div><div class="t" style="left:726.62px;top:845.98px;color:#55ffff">Trace= -6.000</div><div class="t" style="left:98.02px;top:863.94px;color:#fff">CLEAN</div><div class="t" style="left:178.84px;top:863.94px;color:#fff">SCALA</div><div class="t" style="left:259.66px;top:863.94px;color:#fff">AUTOMAP</div><div class="t" style="left:421.30px;top:863.94px;color:#fff">QUIT</div><div class="t" style="left:502.12px;top:863.94px;color:#fff">&lt;</div><div class="t" style="left:726.62px;top:863.94px;color:#55ffff">Det. =  9.000</div><div class="t" style="left:511.10px;top:881.90px;color:#fff">¦ dY/dt= cX + dY</div><div class="t" style="left:107.00px;top:899.86px;color:#fff">a=  3.000</div><div class="t" style="left:286.60px;top:899.86px;color:#fff">b=-18.000</div><div class="t" style="left:107.00px;top:917.82px;color:#fff">c=  2.000</div><div class="t" style="left:286.60px;top:917.82px;color:#fff">d= -9.000</div>
</div></div>
</body></html>
